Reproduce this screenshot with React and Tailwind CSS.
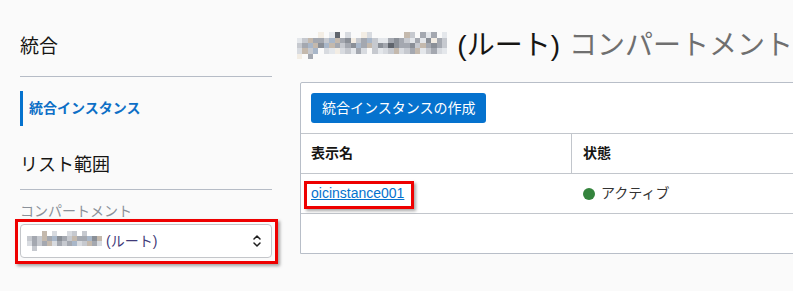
import React from "react";

const PAL = {
  a: "#f3ede4",
  b: "#e4e7eb",
  c: "#c6c9cf",
  d: "#a4a8b0",
  e: "#8a8f97",
  f: "#5f646c",
  g: "#c4b9ad",
  h: "#a9b7c9",
  i: "#d8dbe0",
};

function Mosaic({ rows, cell, className }) {
  const cols = Math.max(...rows.map((r) => r.length));
  const w = cols * cell;
  const h = rows.length * cell;
  return (
    <svg width={w} height={h} viewBox={`0 0 ${w} ${h}`} className={className} shapeRendering="crispEdges">
      {rows.map((r, y) =>
        r.split("").map((ch, x) =>
          PAL[ch] ? <rect key={`${x}-${y}`} x={x * cell} y={y * cell} width={cell} height={cell} fill={PAL[ch]} /> : null
        )
      )}
    </svg>
  );
}

const titleRows = [
  "....a.bf.i..ai......gc.dbd.b",
  "bcgddchgdeacdhcbbdedcbdbeadc",
  "cdhgehgdcdehdgcedfeddecgdedc",
  "igch.ibaicbdi.cbicgicdgbcdib",
  "a.d.........................",
];

const selRows = [
  "...g.i..ic.c...",
  "cdcgdhedcgddheg",
  "idcdgidcdhicgdi",
  ".c.............",
];

const FONT = { fontFamily: '"Liberation Sans", "Noto Sans CJK JP", sans-serif' };

export default function App() {
  return (
    <div className="w-[793px] h-[291px] overflow-hidden bg-[#fafafa] flex text-[#161513]" style={FONT}>
      {/* Sidebar */}
      <div className="ml-[20px] w-[252px] shrink-0 pt-[33px]">
        <div className="text-[19px] leading-[28px]">統合</div>
        <div className="mt-[15px] h-px bg-[#b6bcc6]" />
        <div className="mt-[14px] h-[35px] border-l-[3px] border-[#0572ce] pl-[6px] flex items-center text-[14px] font-semibold text-[#0d6fc6]">
          統合インスタンス
        </div>
        <div className="mt-[25px] text-[18px] leading-[28px]">リスト範囲</div>
        <div className="mt-[10px] h-px bg-[#b6bcc6]" />
        <div className="mt-[11px] text-[14px] leading-[20px] text-[#8a9099]">コンパートメント</div>
        <div className="relative mt-[3px]">
          <div className="h-[34px] bg-white border border-[#c4c6ca] rounded-[4px] flex items-center pl-[6px] pr-[9px]">
            <Mosaic rows={selRows} cell={5} />
            <span className="ml-[4px] text-[14px] text-[#3f3a78]">(ルート)</span>
            <svg width="10" height="14" viewBox="0 0 10 14" className="ml-auto" fill="none" stroke="#1f1f1f" strokeWidth="1.5" strokeLinecap="round" strokeLinejoin="round">
              <path d="M2 5 L5 2 L8 5" />
              <path d="M2 9 L5 12 L8 9" />
            </svg>
          </div>
          <div className="absolute left-[-5px] top-[-5px] w-[263px] h-[45px] border-[3px] border-[#ee0000] shadow-[2px_2px_3px_rgba(0,0,0,0.35)]" />
        </div>
      </div>

      {/* Main */}
      <div className="ml-[25px] flex-1 min-w-0 pt-[28px]">
        <div className="h-[36px] flex items-center whitespace-nowrap text-[28px]">
          <Mosaic rows={titleRows} cell={5.5} />
          <span className="ml-[10px] text-[#161513]">(ルート)</span>
          <span className="ml-[9px] text-[#6f6f6f]">コンパートメント</span>
        </div>
        <div className="mt-[18px] ml-[3px] w-[520px] border border-[#b8bec8] bg-white rounded-tl-[2px]">
          <div className="pl-[10px] py-[10px]">
            <button className="h-[30px] px-[11px] bg-[#0572ce] text-white text-[14px] rounded-[3px]">
              統合インスタンスの作成
            </button>
          </div>
          <div className="flex h-[41px] border-t border-b border-[#c2c6cc] text-[14px] font-bold">
            <div className="w-[271px] border-r border-[#c2c6cc] pl-[10px] flex items-center">表示名</div>
            <div className="pl-[11px] flex items-center">状態</div>
          </div>
          <div className="flex h-[40px] border-b border-[#c2c6cc] text-[14px]">
            <div className="relative w-[271px] pl-[10px] flex items-center">
              <a className="text-[#0572ce] underline">oicinstance001</a>
              <div className="absolute left-[3px] top-[7px] w-[110px] h-[28px] border-[3px] border-[#ee0000] shadow-[2px_2px_3px_rgba(0,0,0,0.35)]" />
            </div>
            <div className="pl-[11px] flex items-center gap-[6px] text-[#333]">
              <span className="w-[12px] h-[12px] rounded-full bg-[#34843d]" />
              <span>アクティブ</span>
            </div>
          </div>
          <div className="h-[39px]" />
        </div>
      </div>
    </div>
  );
}
